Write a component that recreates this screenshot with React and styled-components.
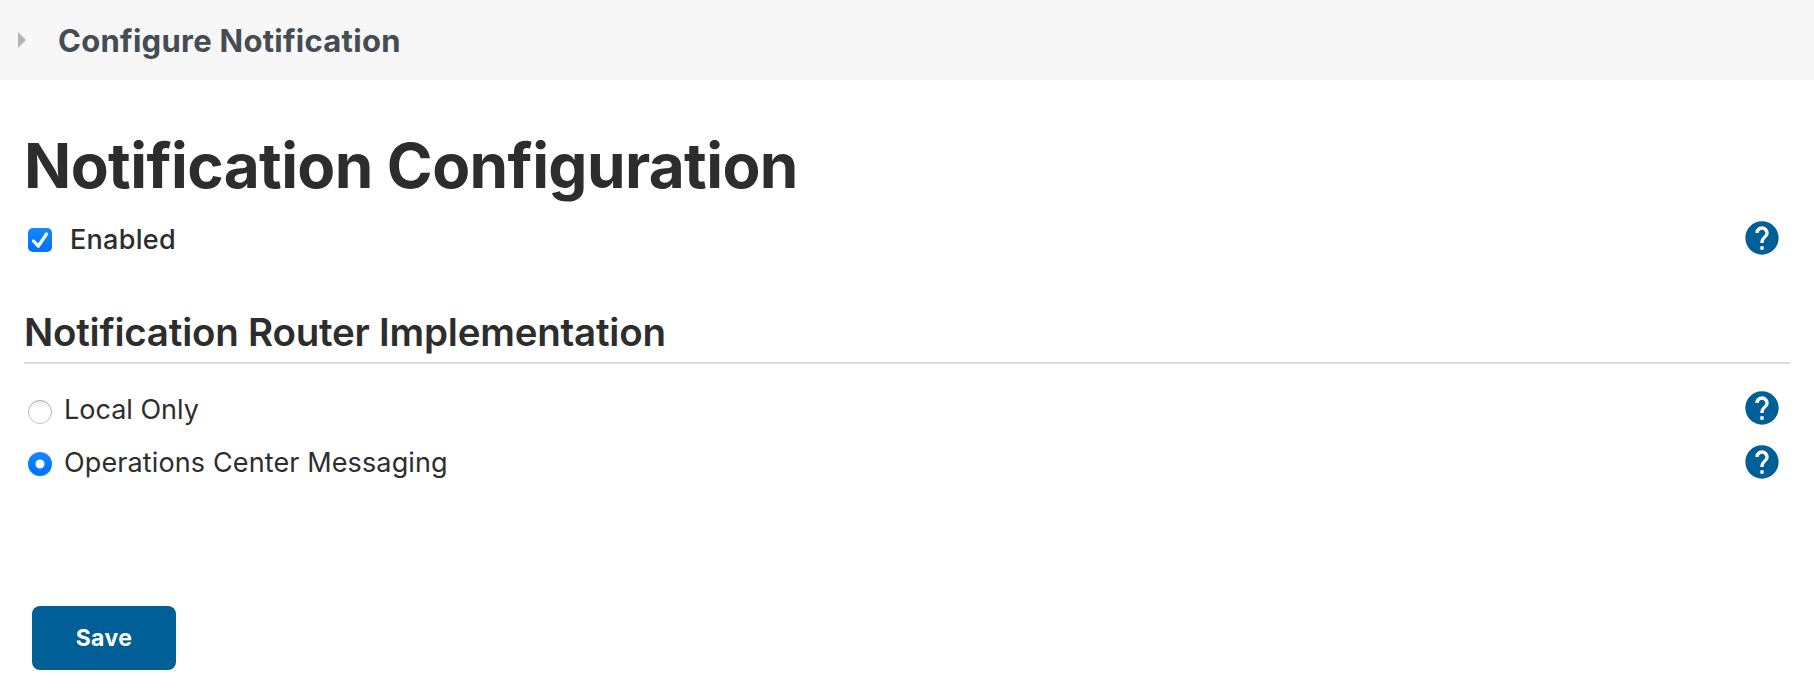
import React from 'react';
import styled, { createGlobalStyle } from 'styled-components';

const Global = createGlobalStyle`
  * { box-sizing: border-box; }
  body { margin: 0; background: #fff; font-family: Inter, "Liberation Sans", sans-serif; color: #2d2d2d; }
  svg { display: block; flex: none; }
`;

const Crumbs = styled.nav`
  display: flex;
  align-items: center;
  height: 80px;
  padding-left: 18px;
  background: #f7f7f7;
`;

const CrumbLabel = styled.span`
  margin-left: 32px;
  padding-top: 2px;
  font-size: 31px;
  line-height: 40px;
  font-weight: 700;
  letter-spacing: 0.27px;
  color: #444c54;
  white-space: nowrap;
`;

const Main = styled.main`
  padding: 48px 24px 0;
`;

const Title = styled.h1`
  margin: 0;
  font-size: 62px;
  line-height: 76px;
  font-weight: 700;
  letter-spacing: -0.6px;
  white-space: nowrap;
`;

const Row = styled.div`
  display: flex;
  align-items: center;
  height: ${p => p.$height}px;
  margin-top: ${p => p.$top || 0}px;
  padding: 0 8px 0 4px;
`;

const Choice = styled.label`
  flex: 1;
  display: flex;
  align-items: center;
  padding-top: ${p => p.$drop}px;
`;

const ChoiceText = styled.span`
  margin-left: ${p => p.$gap}px;
  margin-top: ${p => p.$lift || 0}px;
  font-size: 27px;
  line-height: 36px;
  font-weight: ${p => p.$weight || 400};
  letter-spacing: ${p => p.$spacing || 0}px;
`;

const Section = styled.h2`
  margin: 36px 0 0;
  padding-bottom: 6px;
  border-bottom: 2px solid #dcdcdc;
  font-size: 38.5px;
  line-height: 48px;
  font-weight: 600;
  letter-spacing: -0.22px;
`;

const Save = styled.button`
  display: block;
  margin: 117px 0 0 8px;
  padding: 0;
  width: 144px;
  height: 64px;
  border: 0;
  border-radius: 8px;
  background: #005f96;
  color: #fff;
  font: 700 23px Inter, sans-serif;
  letter-spacing: 0.4px;
`;

const Arrow = () => (
  <svg width="8" height="16"><path d="M0 0L8 8L0 16Z" fill="#b3b3b3" /></svg>
);

const Help = () => (
  <svg width="40" height="40" viewBox="0 0 24 24" fill="#005f96">
    <path d="M12 2C6.48 2 2 6.48 2 12s4.48 10 10 10 10-4.48 10-10S17.52 2 12 2zm1 17h-2v-2h2v2zm2.07-7.75l-.9.92C13.45 12.9 13 13.5 13 15h-2v-.5c0-1.1.45-2.1 1.17-2.83l1.24-1.26c.37-.36.59-.86.59-1.41 0-1.1-.9-2-2-2s-2 .9-2 2H8c0-2.21 1.79-4 4-4s4 1.79 4 4c0 .88-.36 1.68-.93 2.25z" />
  </svg>
);

const BlueGradient = ({ id }) => (
  <linearGradient id={id} x1="0" y1="0" x2="0" y2="1">
    <stop offset="0" stopColor="#1189ff" />
    <stop offset="1" stopColor="#006fff" />
  </linearGradient>
);

const CheckedBox = () => (
  <svg width="24" height="24">
    <defs><BlueGradient id="boxFill" /></defs>
    <rect width="24" height="24" rx="5" fill="url(#boxFill)" />
    <path d="M5.500 13L10.300 18.200L18.500 6" stroke="#fff" strokeWidth="3.300" strokeLinecap="round" strokeLinejoin="round" fill="none" />
  </svg>
);

const RadioOff = () => (
  <svg width="24" height="24">
    <defs>
      <linearGradient id="rim" x1="0" y1="0" x2="0" y2="1">
        <stop offset="0" stopColor="#a6a6a6" />
        <stop offset="1" stopColor="#c6c6c6" />
      </linearGradient>
      <linearGradient id="well" x1="0" y1="0" x2="0" y2="1">
        <stop offset="0" stopColor="#ededed" />
        <stop offset="0.4" stopColor="#fff" />
      </linearGradient>
    </defs>
    <circle cx="12" cy="12" r="11.500" stroke="url(#rim)" fill="url(#well)" />
  </svg>
);

const RadioOn = () => (
  <svg width="24" height="24">
    <defs><BlueGradient id="radioFill" /></defs>
    <circle cx="12" cy="12" r="12" fill="url(#radioFill)" />
    <circle cx="12" cy="12" r="4.500" fill="#fff" />
  </svg>
);

export default function App() {
  return (
    <>
      <Global />
      <Crumbs>
        <Arrow />
        <CrumbLabel>Configure Notification</CrumbLabel>
      </Crumbs>
      <Main>
        <Title>Notification Configuration</Title>
        <Row $height={68}>
          <Choice $drop={4}><CheckedBox /><ChoiceText $gap={18} $weight={500} $spacing={0.3}>Enabled</ChoiceText></Choice>
          <Help />
        </Row>
        <Section>Notification Router Implementation</Section>
        <Row $height={54} $top={17}>
          <Choice $drop={8}><RadioOff /><ChoiceText $gap={12} $lift={-4}>Local Only</ChoiceText></Choice>
          <Help />
        </Row>
        <Row $height={54}>
          <Choice $drop={4}><RadioOn /><ChoiceText $gap={12} $lift={-2} $spacing={0.12}>Operations Center Messaging</ChoiceText></Choice>
          <Help />
        </Row>
        <Save>Save</Save>
      </Main>
    </>
  );
}
